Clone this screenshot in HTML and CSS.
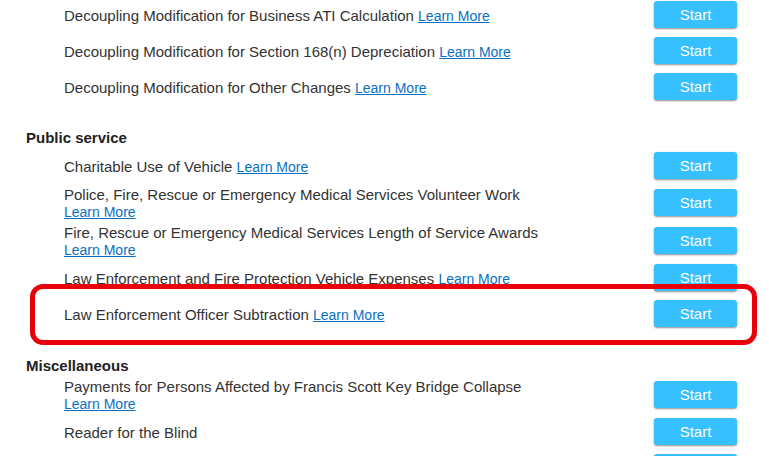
FILE: index.html
```html
<!DOCTYPE html>
<html>
<head>
<meta charset="utf-8">
<link rel="stylesheet" href="styles.css">
</head>
<body>
<div class="page">
  <section class="group first">
    <div class="row">
      <div class="label">Decoupling Modification for Business ATI Calculation <a href="#">Learn More</a></div>
      <button class="start">Start</button>
    </div>
    <div class="row">
      <div class="label">Decoupling Modification for Section 168(n) Depreciation <a href="#">Learn More</a></div>
      <button class="start">Start</button>
    </div>
    <div class="row">
      <div class="label">Decoupling Modification for Other Changes <a href="#">Learn More</a></div>
      <button class="start">Start</button>
    </div>
  </section>

  <section class="group">
    <h3 class="heading">Public service</h3>
    <div class="row">
      <div class="label">Charitable Use of Vehicle <a href="#">Learn More</a></div>
      <button class="start">Start</button>
    </div>
    <div class="row">
      <div class="label">Police, Fire, Rescue or Emergency Medical Services Volunteer Work <a href="#">Learn More</a></div>
      <button class="start">Start</button>
    </div>
    <div class="row">
      <div class="label">Fire, Rescue or Emergency Medical Services Length of Service Awards <a href="#">Learn More</a></div>
      <button class="start">Start</button>
    </div>
    <div class="row">
      <div class="label">Law Enforcement and Fire Protection Vehicle Expenses <a href="#">Learn More</a></div>
      <button class="start">Start</button>
    </div>
    <div class="row highlighted">
      <div class="label">Law Enforcement Officer Subtraction <a href="#">Learn More</a></div>
      <button class="start">Start</button>
      <div class="highlight-box"></div>
    </div>
  </section>

  <section class="group after-highlight">
    <h3 class="heading">Miscellaneous</h3>
    <div class="row">
      <div class="label">Payments for Persons Affected by Francis Scott Key Bridge Collapse <a href="#">Learn More</a></div>
      <button class="start">Start</button>
    </div>
    <div class="row">
      <div class="label">Reader for the Blind</div>
      <button class="start">Start</button>
    </div>
    <div class="row">
      <div class="label"></div>
      <button class="start">Start</button>
    </div>
  </section>
</div>
</body>
</html>
```

FILE: styles.css
```css
html, body {
  margin: 0;
  padding: 0;
  background: #ffffff;
}

body {
  font-family: "Liberation Sans", Arial, sans-serif;
  font-size: 15px;
  line-height: 17px;
  color: #333333;
  overflow: hidden;
}

.page {
  width: 769px;
  margin-top: -3px;
}

.group {
  display: flex;
  flex-direction: column;
  margin-top: 24px;
}

.group.first {
  margin-top: 0;
}

.group.after-highlight {
  margin-top: 25px;
}

.heading {
  margin: 0 0 2px 26px;
  font-size: 15px;
  line-height: 17px;
  font-weight: bold;
  color: #222222;
}

.row {
  position: relative;
  display: flex;
  align-items: center;
  justify-content: space-between;
  padding: 2px 32px 2px 64px;
}

.label {
  width: 500px;
}

.label a {
  color: #0a6fc2;
  font-size: 14px;
  line-height: 14px;
  text-decoration: underline;
  white-space: nowrap;
}

.start {
  flex: none;
  width: 83px;
  height: 27px;
  margin: 2px 0 3px;
  border: none;
  border-radius: 3px;
  background: #36c0ff;
  color: #ffffff;
  font-family: "Liberation Sans", Arial, sans-serif;
  font-size: 15px;
  box-shadow: 0 1px 2px rgba(0, 0, 0, 0.45);
  padding: 0;
}

.highlight-box {
  position: absolute;
  left: 30px;
  right: 12px;
  top: -12px;
  bottom: -13px;
  border: 5px solid #e8000b;
  border-radius: 13px;
  pointer-events: none;
}
```
